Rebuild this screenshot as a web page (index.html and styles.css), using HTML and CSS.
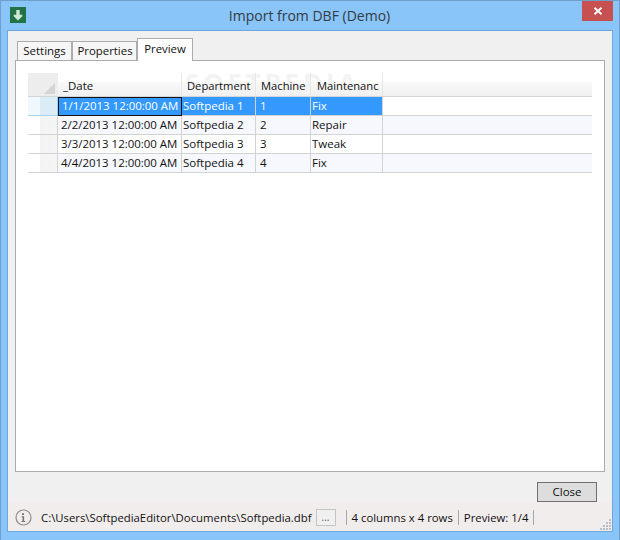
FILE: index.html
```html
<!DOCTYPE html>
<html lang="en">
<head>
<meta charset="utf-8">
<title>Import from DBF (Demo)</title>
<link rel="stylesheet" href="styles.css">
</head>
<body>
<div class="window">
  <header class="titlebar">
    <span class="app-icon">
      <svg width="16" height="16" viewBox="0 0 16 16"><path d="M6.300 3h3.400v4.800h2.600v1.400L8 13.500 3.700 9.200V7.800h2.600z" fill="#cfe8d6"/></svg>
    </span>
    <h1 class="title">Import from DBF (Demo)</h1>
    <button class="close-x" aria-label="Close">
      <svg width="10" height="8" viewBox="0 0 10 8"><path d="M1.500 .8 8.500 7.200M8.500 .8 1.500 7.200" stroke="#fff" stroke-width="2" fill="none"/></svg>
    </button>
  </header>
  <div class="client">
    <div class="tabs">
      <div class="tab tab-settings">Settings</div>
      <div class="tab tab-properties">Properties</div>
      <div class="tab active">Preview</div>
    </div>
    <main class="panel">
      <div class="sheet">
        <div class="row head">
          <div class="watermark">SOFTPEDIA</div>
          <div class="rowhead corner"><svg width="11" height="11" viewBox="0 0 11 11"><path d="M11 0v11H0z" fill="#d4d4d4"/></svg></div>
          <div class="cell date">_Date</div>
          <div class="cell dept">Department</div>
          <div class="cell mach">Machine</div>
          <div class="cell main">Maintenanc</div>
        </div>
        <div class="row selected">
          <div class="rowhead"></div>
          <div class="cell date focus">1/1/2013 12:00:00 AM</div>
          <div class="cell dept">Softpedia 1</div>
          <div class="cell mach">1</div>
          <div class="cell main">Fix</div>
        </div>
        <div class="row alt">
          <div class="rowhead"></div>
          <div class="cell date">2/2/2013 12:00:00 AM</div>
          <div class="cell dept">Softpedia 2</div>
          <div class="cell mach">2</div>
          <div class="cell main">Repair</div>
        </div>
        <div class="row">
          <div class="rowhead"></div>
          <div class="cell date">3/3/2013 12:00:00 AM</div>
          <div class="cell dept">Softpedia 3</div>
          <div class="cell mach">3</div>
          <div class="cell main">Tweak</div>
        </div>
        <div class="row alt">
          <div class="rowhead"></div>
          <div class="cell date">4/4/2013 12:00:00 AM</div>
          <div class="cell dept">Softpedia 4</div>
          <div class="cell mach">4</div>
          <div class="cell main">Fix</div>
        </div>
      </div>
    </main>
    <div class="actions"><button class="close-btn">Close</button></div>
    <footer class="status">
      <svg class="info" width="17" height="17" viewBox="0 0 17 17"><circle cx="8.500" cy="8.500" r="7.500" fill="none" stroke="#8c8c8c" stroke-width="1.200"/><path d="M7 4.200h2v1.800H7zM6.500 7.200h2.600v4.800h1V13H6.500v-1h1V8.200h-1z" fill="#777"/></svg>
      <span class="path">C:\Users\SoftpediaEditor\Documents\Softpedia.dbf</span>
      <button class="browse">...</button>
      <span class="sep first"></span>
      <span class="stat">4 columns x 4 rows</span>
      <span class="sep"></span>
      <span class="stat">Preview: 1/4</span>
      <span class="sep"></span>
      <svg class="grip" width="12" height="12" viewBox="0 0 12 12" fill="#b9bfc9"><path d="M9 0h2v2H9zM6 3h2v2H6zM9 3h2v2H9zM3 6h2v2H3zM6 6h2v2H6zM9 6h2v2H9zM0 9h2v2H0zM3 9h2v2H3zM6 9h2v2H6zM9 9h2v2H9z"/></svg>
    </footer>
  </div>
</div>
</body>
</html>
```

FILE: styles.css
```css
* { box-sizing: border-box; }
html, body { margin: 0; padding: 0; }
body {
  width: 620px;
  height: 540px;
  overflow: hidden;
  font-family: "Open Sans", "Noto Sans", sans-serif;
  font-size: 11.5px;
  color: #111;
}
.window {
  width: 620px;
  height: 540px;
  display: flex;
  flex-direction: column;
  background: #8ac5fa;
  border: 1px solid #6f9fcb;
  border-bottom: 0;
  padding: 0 6px 8px;
}
.titlebar {
  height: 29px;
  flex: none;
  display: flex;
  align-items: flex-start;
  position: relative;
}
.app-icon {
  width: 16px;
  height: 16px;
  margin-top: 6px;
  margin-left: 3px;
  background: #217346;
  display: block;
}
.app-icon svg { display: block; }
.title {
  position: absolute;
  left: 0;
  right: 1px;
  top: 5px;
  margin: 0;
  text-align: center;
  font-size: 14px;
  font-weight: 400;
  line-height: 20px;
  color: #333a42;
}
.close-x {
  position: absolute;
  right: 0;
  top: 0;
  width: 31px;
  height: 20px;
  padding: 0;
  border: 0;
  background: #c75050;
  display: flex;
  align-items: center;
  justify-content: center;
}
.client {
  flex: 1;
  min-height: 0;
  display: flex;
  flex-direction: column;
  background: #f0f0f0;
  border: 1px solid #6da7dc;
  padding: 8px 7px 0;
}
.tabs {
  display: flex;
  align-items: flex-end;
  height: 22px;
  padding-left: 2px;
  flex: none;
  margin-bottom: -1px;
  position: relative;
}
.tab {
  height: 19px;
  margin-bottom: 1px;
  border: 1px solid #acacac;
  border-bottom: 0;
  background: #f6f6f6;
  line-height: 18px;
  text-align: center;
}
.tab-settings { width: 55px; }
.tab-properties { width: 65px; padding-left: 1px; font-size: 11.4px; }
.tab.active {
  width: 56px;
  height: 23px;
  margin-bottom: 0;
  background: #fff;
  line-height: 19px;
  position: relative;
  z-index: 1;
  font-size: 11.4px;
}
.panel {
  height: 412px;
  flex: none;
  background: #fff;
  border: 1px solid #acacac;
  padding: 12px 12px 0;
}
.sheet { width: 564px; }
.watermark {
  position: absolute;
  left: 157px;
  top: -4px;
  font-size: 26px;
  font-weight: 700;
  letter-spacing: 3.800px;
  line-height: 28px;
  color: #f3f3f3;
  white-space: nowrap;
}
.row {
  display: flex;
  height: 19px;
  background: #fff;
  border-bottom: 1px solid #d2d2d2;
  line-height: 18px;
}
.row.alt { background: #f7f8fd; }
.row.head {
  height: 24px;
  background: linear-gradient(#ffffff 0%, #ffffff 37%, #f9f9f9 38%, #f0f0f0 100%);
  border-bottom: 1px solid #d5d5d5;
  line-height: 26px;
  position: relative;
  font-size: 11.2px;
}
.rowhead {
  width: 30px;
  flex: none;
  background: linear-gradient(90deg, #ffffff 0%, #ffffff 40%, #f3f3f3 40%, #f5f5f5 100%);
  border-right: 1px solid #d2d2d2;
}
.corner {
  background: #ededed;
  border-right: 0;
  display: flex;
  align-items: flex-end;
  justify-content: flex-end;
  padding: 0 3px 2px 0;
  position: relative;
}
.selected .rowhead {
  background: linear-gradient(90deg, #eff8fd 0%, #eff8fd 40%, #dcecf6 40%, #dcecf6 100%);
  border-right: 1px solid #9ed2ec;
  border-bottom: 1px solid #a6d6ee;
  height: 19px;
}
.row.selected .cell { background: #3399ff; color: #fff; height: 18px; }
.cell {
  flex: none;
  border-right: 1px solid #d2d2d2;
  padding-left: 1px;
  white-space: nowrap;
  overflow: hidden;
}
.date { width: 124px; padding-left: 3px; font-size: 11.45px; }
.dept { width: 74px; }
.mach { width: 55px; padding-left: 4px; }
.main { width: 72px; padding-left: 1px; }
.head .cell { padding-left: 5px; border-right: 1px solid #e6e6e6; position: relative; }
.head .main { padding-left: 6px; }
.row.selected .focus {
  border: 1px solid #111;
  line-height: 16px;
  padding-left: 3px;
  height: 19px;
  margin-left: 0;
}
.actions {
  height: 30px;
  flex: none;
  display: flex;
  justify-content: flex-end;
  align-items: flex-start;
  padding: 10px 8px 0 0;
}
.close-btn {
  width: 60px;
  height: 20px;
  padding: 0;
  background: #dddddd;
  border: 1px solid #707070;
  font: inherit;
  color: #111;
  line-height: 18px;
}
.status {
  flex: 1;
  min-height: 0;
  display: flex;
  align-items: center;
  margin: 0 -7px;
  padding: 2px 0 0 7px;
  background: #f1eded;
  position: relative;
  font-size: 11.35px;
}
.info { flex: none; margin-right: 9px; }
.path { white-space: nowrap; }
.browse {
  width: 20px;
  height: 17px;
  padding: 0;
  margin-left: 4px;
  background: #f0f0f0;
  border: 1px solid #c4c4c4;
  font: inherit;
  font-size: 10px;
  color: #555;
  line-height: 15px;
  flex: none;
}
.sep { width: 1px; height: 15px; background: #a8a8a8; flex: none; margin: 0 5px; }
.sep.first { margin-left: 10px; }
.stat { white-space: nowrap; }
.grip { position: absolute; right: 0; bottom: 0; }
```
